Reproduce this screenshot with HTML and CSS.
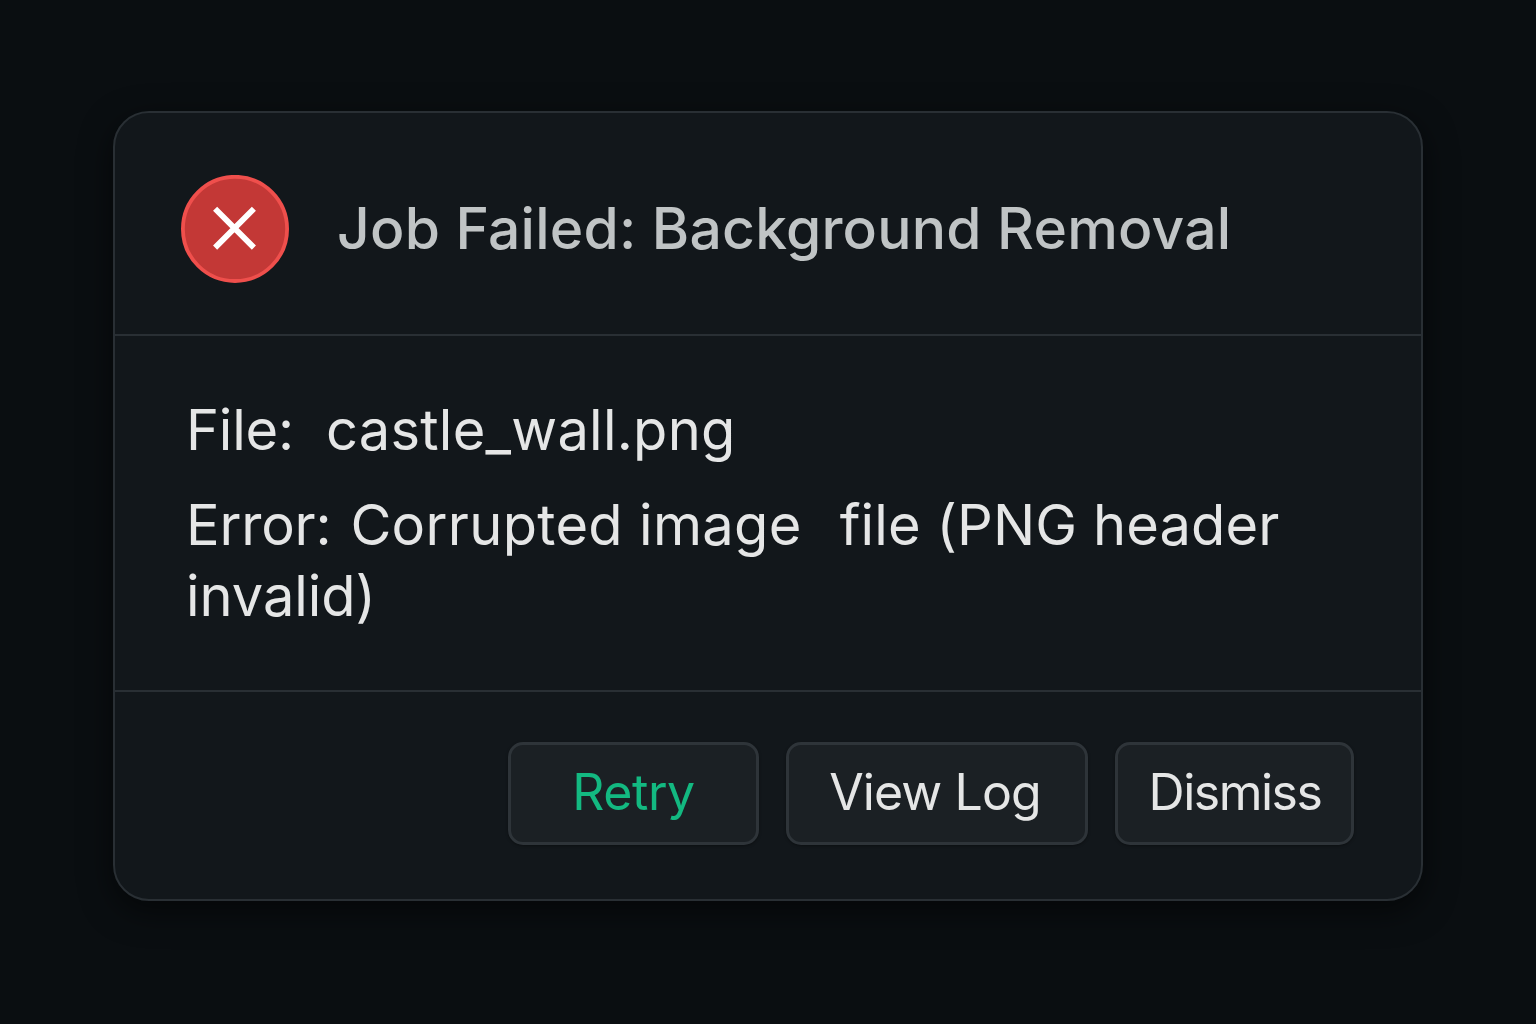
FILE: index.html
```html
<!DOCTYPE html>
<html lang="en">
<head>
<meta charset="utf-8">
<title>Job Failed</title>
<link rel="stylesheet" href="styles.css">
</head>
<body>
<main class="dialog" role="alertdialog" aria-labelledby="title">
  <header class="header">
    <svg class="icon" viewBox="0 0 108 108" aria-hidden="true">
      <circle cx="54" cy="53.9" r="52.1" fill="#c33836" stroke="#ef4f4c" stroke-width="3.8"/>
      <path d="M34.1 33.8 72.9 72.6M72.9 33.8 34.1 72.6" fill="none" stroke="#fff" stroke-width="5.8"/>
    </svg>
    <h1 class="title" id="title">Job Failed: Background Removal</h1>
  </header>
  <section class="body">
    <p class="line file"><span class="label">File:</span><span class="name">castle_wall.png</span></p>
    <p class="line error"><span class="prefix">Error:</span> <span class="start">Corrupted image</span><span class="rest">file (PNG header</span><br><span class="last">invalid)</span></p>
  </section>
  <footer class="footer">
    <button class="button retry"><span>Retry</span></button>
    <button class="button view"><span>View Log</span></button>
    <button class="button dismiss"><span>Dismiss</span></button>
  </footer>
</main>
</body>
</html>
```
FILE: styles.css
```css
* { box-sizing: border-box; }
body {
  margin: 0;
  height: 1024px;
  padding: 111px 0 0 113px;
  overflow: hidden;
  background: #0a0e11;
  font-family: Inter, "Liberation Sans", sans-serif;
  color: #e5e6e6;
}
.dialog {
  width: 1310px;
  height: 790px;
  display: flex;
  flex-direction: column;
  border: 2px solid #292f34;
  border-radius: 36px;
  background: #12171b;
  box-shadow: 0 10px 32px rgba(0, 0, 0, .55);
}
.header {
  height: 223px;
  display: flex;
  align-items: center;
  gap: 48px;
  padding: 11px 0 0 66px;
  border-bottom: 2px solid #292f34;
}
.icon { width: 108px; height: 108px; flex: none; }
.title {
  margin: 0;
  font-size: 57px;
  line-height: 68px;
  font-weight: 540;
  letter-spacing: .21px;
  color: #c0c4c5;
  white-space: nowrap;
}
.body {
  height: 356px;
  padding: 59px 0 0 71px;
  border-bottom: 2px solid #292f34;
}
.line { margin: 0; font-size: 56px; line-height: 70px; letter-spacing: .25px; white-space: nowrap; }
.error { margin-top: 25px; line-height: 71px; }
.label { letter-spacing: -.2px; }
.name { margin-left: 32px; }
.prefix { letter-spacing: -.2px; margin-right: 3px; }
.start { letter-spacing: .33px; }
.rest { margin-left: 38px; letter-spacing: .1px; }
.last { letter-spacing: -.05px; }
.footer {
  flex: 1;
  display: flex;
  justify-content: flex-end;
  align-items: flex-start;
  gap: 27px;
  padding: 50px 67px 0 0;
}
.button {
  height: 103px;
  padding: 0 0 3px;
  border: 3px solid #2e3439;
  border-radius: 15px;
  background: #1b2024;
  box-shadow: 0 1px 3px rgba(0, 0, 0, .35);
  color: inherit;
  font: 400 50px/60px Inter, "Liberation Sans", sans-serif;
  white-space: nowrap;
}
.retry { width: 251px; color: #13b981; letter-spacing: -.4px; }
.view { width: 302px; padding-right: 4px; letter-spacing: -.9px; }
.dismiss { width: 239px; padding-left: 1px; letter-spacing: -1.5px; }
```
